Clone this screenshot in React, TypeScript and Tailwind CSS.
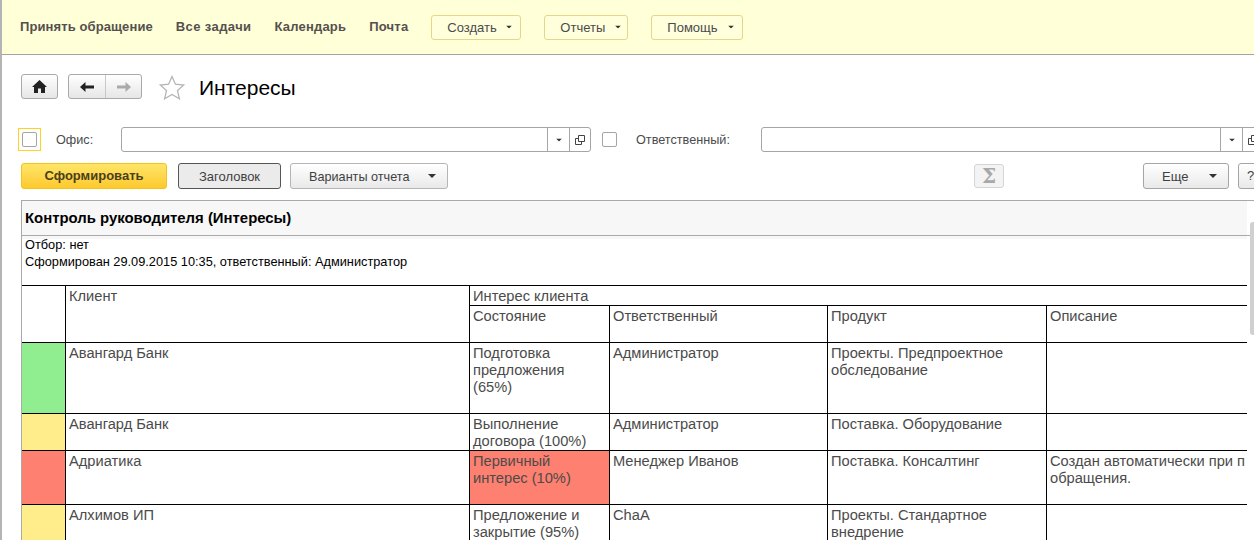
type Row = {
  color: string;
  height: string;
  client: string;
  state: string;
  stateBg?: string;
  owner: string;
  product: string;
  note?: string;
};

const rows: Row[] = [
  {
    color: "bg-[#90ee90]",
    height: "h-[71px]",
    client: "Авангард Банк",
    state: "Подготовка предложения (65%)",
    owner: "Администратор",
    product: "Проекты. Предпроектное обследование",
  },
  {
    color: "bg-[#ffec8b]",
    height: "h-[37px]",
    client: "Авангард Банк",
    state: "Выполнение договора (100%)",
    owner: "Администратор",
    product: "Поставка. Оборудование",
  },
  {
    color: "bg-[#fe8070]",
    height: "h-[54px]",
    client: "Адриатика",
    state: "Первичный интерес (10%)",
    stateBg: "bg-[#fe8070]",
    owner: "Менеджер Иванов",
    product: "Поставка. Консалтинг",
    note: "Создан автоматически при п\nобращения.",
  },
  {
    color: "bg-[#ffec8b]",
    height: "h-[71px]",
    client: "Алхимов ИП",
    state: "Предложение и закрытие (95%)",
    owner: "ChaA",
    product: "Проекты. Стандартное внедрение",
  },
];

const cell = "border-t border-l border-black px-[3px] pt-[2px] align-top font-normal text-left";

function Caret({ className = "" }: { className?: string }) {
  return (
    <svg width="8" height="4" viewBox="0 0 8 4" className={className}>
      <path d="M0 0h8L4 4z" fill="#333" />
    </svg>
  );
}

function MenuButton({ label, width, gap }: { label: string; width: string; gap: string }) {
  return (
    <button className={`${width} h-[25px] shrink-0 flex items-center pl-[15px] ${gap} rounded-[3px] border border-[#e6d68c] bg-[#ffffdc] text-[13px] text-[#4b4b4b]`}>
      <span className="mt-[2px]">{label}</span>
      <Caret className="scale-75" />
    </button>
  );
}

function CopyIcon() {
  return (
    <svg width="10" height="10" viewBox="0 0 10 10" fill="none" stroke="#444">
      <path d="M3.5 .5h6v6h-6z" />
      <path d="M3 3.5H.5v6h6V7" />
    </svg>
  );
}

function Field({ width }: { width: string }) {
  return (
    <div className={`${width} h-[25px] shrink-0 flex justify-end rounded-[3px] border border-[#a5a5a5] bg-white`}>
      <div className="w-[22px] flex items-center justify-center border-l border-[#a5a5a5]">
        <Caret className="scale-75" />
      </div>
      <div className="w-[21px] flex items-center justify-center border-l border-[#a5a5a5]">
        <CopyIcon />
      </div>
    </div>
  );
}

export default function App() {
  return (
    <div className="relative w-[1254px] h-[540px] overflow-hidden bg-white border-l-2 border-[#b4b4b4] font-['Liberation_Sans',Arial,sans-serif]">
      {/* верхняя панель */}
      <div className="h-[55px] flex items-center pl-[18px] bg-[#ffffd8] border-b border-[#a3a3a3]">
        <div className="flex gap-[23px] text-[13px] font-bold text-[#55504f]">
          <span className="tracking-[0.1px]">Принять обращение</span>
          <span className="tracking-[0.4px]">Все задачи</span>
          <span className="tracking-[0.2px]">Календарь</span>
          <span className="tracking-[0.2px]">Почта</span>
        </div>
        <div className="flex ml-[23px] gap-[23px]">
          <MenuButton label="Создать" width="w-[90px]" gap="gap-[8px]" />
          <MenuButton label="Отчеты" width="w-[84px]" gap="gap-[9px]" />
          <MenuButton label="Помощь" width="w-[92px]" gap="gap-[9px]" />
        </div>
      </div>

      {/* навигация */}
      <div className="flex items-center h-[66px] pl-[19px] pb-[3px]">
        <button className="w-[37px] h-[25px] flex items-center justify-center rounded-[3px] border border-[#a9a9a9] bg-linear-to-b from-white to-[#e6e6e6]">
          <svg width="15" height="13" viewBox="0 0 15 13">
            <path d="M7.5 0 15 7h-2v6H9V8.5H6V13H2V7H0z" fill="#222" />
          </svg>
        </button>
        <div className="ml-[10px] w-[74px] h-[25px] flex rounded-[3px] border border-[#a9a9a9] bg-linear-to-b from-white to-[#e6e6e6]">
          <div className="w-[37px] flex items-center justify-center border-r border-[#c8c8c8]">
            <svg width="14" height="10" viewBox="0 0 14 10">
              <path d="M5.5 0v3.5H14v3H5.5V10L0 5z" fill="#222" />
            </svg>
          </div>
          <div className="flex-1 flex items-center justify-center">
            <svg width="14" height="10" viewBox="0 0 14 10">
              <path d="M8.5 0v3.5H0v3h8.5V10L14 5z" fill="#aaa" />
            </svg>
          </div>
        </div>
        <svg width="26" height="25" viewBox="0 0 26 25" className="ml-[17px] mt-[1px]">
          <path d="M13 1.5l3.4 7.7 8.4.8-6.3 5.6 1.9 8.2-7.4-4.3-7.4 4.3 1.9-8.2L1.2 10l8.4-.8z" fill="#fff" stroke="#b5b5b5" strokeWidth="1.3" />
        </svg>
        <h1 className="ml-[14px] mt-[2px] text-[21px] text-black leading-none">Интересы</h1>
      </div>

      {/* отбор */}
      <div className="flex items-center h-[25px] mt-[6px] pl-[16px] text-[12.67px] text-[#4b4b4b]">
        <div className="w-[23px] h-[23px] shrink-0 flex items-center justify-center border border-[#ffd21f]">
          <div className="w-[15px] h-[15px] rounded-[2px] border border-[#a5a5a5]" />
        </div>
        <span className="ml-[15px] mt-[2px] w-[65px] shrink-0">Офис:</span>
        <Field width="w-[470px]" />
        <div className="ml-[11px] w-[15px] h-[15px] shrink-0 rounded-[2px] border border-[#a5a5a5]" />
        <span className="ml-[19px] mt-[2px] w-[125px] shrink-0">Ответственный:</span>
        <Field width="w-[503px]" />
      </div>

      {/* кнопки */}
      <div className="flex items-center h-[26px] mt-[11px] pl-[19px] text-[13px] text-[#3f3f3f]">
        <button className="w-[146px] h-[26px] shrink-0 rounded-[3px] border border-[#f0c419] bg-linear-to-b from-[#ffe566] to-[#fdc92b] font-bold text-[#4a3f1c]">
          Сформировать
        </button>
        <button className="ml-[11px] w-[103px] h-[26px] shrink-0 pt-[2px] rounded-[3px] border border-[#555] bg-[#ebebeb]">
          Заголовок
        </button>
        <button className="ml-[9px] w-[158px] h-[26px] shrink-0 flex items-center justify-between pl-[18px] pr-[11px] text-[12.67px] rounded-[3px] border border-[#b5b5b5] bg-linear-to-b from-white to-[#e9e9e9]">
          <span className="mt-[2px]">Варианты отчета</span>
          <Caret />
        </button>
        <button className="ml-[526px] w-[30px] h-[24px] shrink-0 flex items-center justify-center rounded-[3px] border border-[#d5d5d5] bg-[#f3f3f3] font-['DejaVu_Serif',serif] text-[20px] font-bold leading-none text-[#a8a8a8]">
          Σ
        </button>
        <button className="ml-[139px] w-[86px] h-[26px] shrink-0 flex items-center justify-between pl-[18px] pr-[11px] rounded-[3px] border border-[#a5a5a5] bg-linear-to-b from-white to-[#e9e9e9]">
          <span className="mt-[2px]">Еще</span>
          <Caret />
        </button>
        <button className="ml-[9px] w-[30px] h-[26px] shrink-0 pl-[8px] text-left rounded-[3px] border border-[#a5a5a5] bg-linear-to-b from-white to-[#e9e9e9]">
          ?
        </button>
      </div>

      {/* отчет */}
      <div className="mt-[11px] ml-[19px] border-l border-t border-[#a9a9a9]">
        <div className="h-[35px] border-b border-[#a9a9a9]">
          <div className="h-full w-[1225px] flex items-center pl-[3px] bg-[#f7f7f7]">
            <h2 className="text-[14.9px] font-bold text-black">Контроль руководителя (Интересы)</h2>
          </div>
        </div>
        <div className="h-[3px] -mb-[3px] w-[1225px] bg-[#f7f7f7]" />
        <div className="relative h-[49px] pl-[3px] text-[12.77px] leading-[17px] text-black">
          <div className="-mt-px">Отбор: нет</div>
          <div>Сформирован 29.09.2015 10:35, ответственный: Администратор</div>
        </div>
        <table className="table-fixed border-separate border-spacing-0 w-[1225px] text-[14.67px] leading-[17px] text-[#4b4b4b]">
          <colgroup>
            <col className="w-[43px]" />
            <col className="w-[404px]" />
            <col className="w-[140px]" />
            <col className="w-[218px]" />
            <col className="w-[219px]" />
            <col className="w-[201px]" />
          </colgroup>
          <thead>
            <tr className="h-[20px]">
              <th rowSpan={2} className="border-t border-black" />
              <th rowSpan={2} className={cell}>Клиент</th>
              <th colSpan={4} className={`${cell} pt-0`}>Интерес клиента</th>
            </tr>
            <tr className="h-[37px]">
              <th className={cell}>Состояние</th>
              <th className={cell}>Ответственный</th>
              <th className={cell}>Продукт</th>
              <th className={cell}>Описание</th>
            </tr>
          </thead>
          <tbody>
            {rows.map((row, i) => (
              <tr key={i} className={row.height}>
                <td className={`border-t border-black ${row.color}`} />
                <td className={cell}>{row.client}</td>
                <td className={`${cell} ${row.stateBg ?? ""}`}>{row.state}</td>
                <td className={cell}>{row.owner}</td>
                <td className={cell}>{row.product}</td>
                <td className={`${cell} whitespace-pre overflow-hidden`}>{row.note}</td>
              </tr>
            ))}
          </tbody>
        </table>
      </div>

      {/* полоса прокрутки */}
      <div className="absolute right-0 top-[222px] w-[4px] h-[113px] rounded-l-[3px] bg-[#d0d0d0]" />
    </div>
  );
}
